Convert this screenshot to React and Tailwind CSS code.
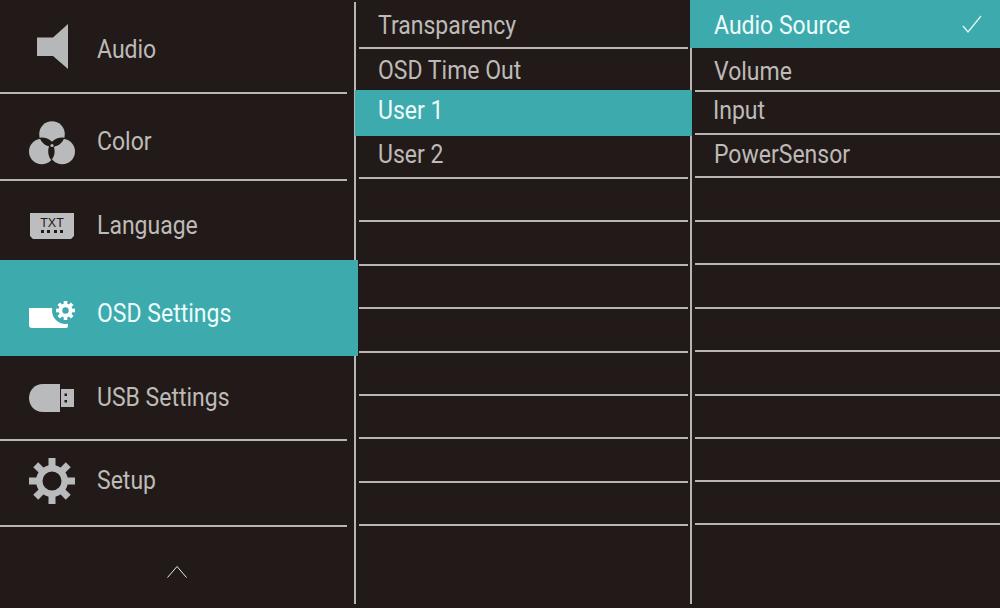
const line = 'bg-[#b9b5b2]'

const Speaker = () => (
    <svg width="46" height="46" viewBox="0 0 46 46" className="block">
        <path d="M8 14.5 L24 14.5 L39 1 L39 46 L24 33 L8 33 Z" fill="#b6b7b9" />
    </svg>
)

const ColorIcon = () => (
    <svg width="46" height="44" viewBox="0 0 46 44" className="block">
        <defs>
            <clipPath id="ct"><circle cx="23" cy="13" r="12.8" /></clipPath>
            <clipPath id="cl"><circle cx="12.8" cy="30.5" r="12.8" /></clipPath>
        </defs>
        <circle cx="23" cy="13" r="12.8" fill="#b9babc" />
        <circle cx="12.8" cy="30.5" r="12.8" fill="#b9babc" />
        <circle cx="33.2" cy="30.5" r="12.8" fill="#b9babc" />
        <g clipPath="url(#ct)"><circle cx="12.8" cy="30.5" r="14" fill="#221a18" /><circle cx="33.2" cy="30.5" r="14" fill="#221a18" /></g>
        <g clipPath="url(#cl)"><circle cx="33.2" cy="30.5" r="14" fill="#221a18" /></g>
        <circle cx="23" cy="24.5" r="1.6" fill="#b9babc" />
    </svg>
)

const TxtIcon = () => (
    <svg width="46" height="28" viewBox="0 0 46 28" className="block">
        <path d="M1 1 H45 V24 L42 27 H4 L1 24 Z" fill="#bcbdbf" />
        <text x="23" y="14.5" textAnchor="middle" fontSize="12.5" fill="#221a18" style={{ fontFamily: '"Liberation Sans", sans-serif' }}>TXT</text>
        <g fill="#221a18">
            <rect x="12" y="18" width="3" height="3" />
            <rect x="18" y="18" width="3" height="3" />
            <rect x="25" y="18" width="3" height="3" />
            <rect x="31" y="18" width="3" height="3" />
        </g>
    </svg>
)

const gearTeeth = [0, 45, 90, 135, 180, 225, 270, 315]

const Gear = ({ cx, cy, r, hole, tooth, len, fill }) => (
    <g>
        {gearTeeth.map((a) => (
            <rect key={a} x={cx - tooth / 2} y={cy - r} width={tooth} height={len} fill={fill} transform={`rotate(${a} ${cx} ${cy})`} />
        ))}
        <circle cx={cx} cy={cy} r={(r - len + 1 + hole) / 2} fill="none" stroke={fill} strokeWidth={r - len + 1 - hole} />
    </g>
)

const OsdIcon = () => (
    <svg width="46" height="30" viewBox="0 0 46 30" className="block">
        <path d="M0 8 H39 V26 Q39 28 37 28 H3 Q0 28 0 25 Z" fill="#fff" />
        <circle cx="36.5" cy="10.5" r="13.5" fill="#3daaad" />
        <Gear cx={36.5} cy={10.5} r={9.5} hole={3.2} tooth={3.6} len={3.5} fill="#fff" />
    </svg>
)

const UsbIcon = () => (
    <svg width="46" height="28" viewBox="0 0 46 28" className="block">
        <path d="M31 0 V28 H14 C5 28 0 21 0 14 C0 7 5 0 14 0 Z" fill="#b9babc" />
        <rect x="32" y="5" width="13" height="18" fill="#b9babc" />
        <rect x="35.5" y="9.5" width="2.5" height="2.5" fill="#221a18" />
        <rect x="35.5" y="16" width="2.5" height="2.5" fill="#221a18" />
    </svg>
)

const SetupIcon = () => (
    <svg width="46" height="46" viewBox="0 0 46 46" className="block">
        <Gear cx={23} cy={23} r={23} hole={9.5} tooth={7} len={8} fill="#b9babc" />
    </svg>
)

const menu = [
    { label: 'Audio', Icon: Speaker, h: 'h-[94px]', pad: 'pt-[6px]', iconGap: 'mb-[6px]', border: true },
    { label: 'Color', Icon: ColorIcon, h: 'h-[87px]', pad: 'pt-[10px]', iconGap: 'mt-[3px]', border: true },
    { label: 'Language', Icon: TxtIcon, h: 'h-[79px]', pad: 'pt-[10px]' },
    { label: 'OSD Settings', Icon: OsdIcon, h: 'h-[96px]', pad: 'pt-[10px]', iconGap: 'mt-[4px]', active: true },
    { label: 'USB Settings', Icon: UsbIcon, h: 'h-[85px]', border: true },
    { label: 'Setup', Icon: SetupIcon, h: 'h-[86px]', pad: 'pb-[4px]', textGap: 'mb-[2px]', border: true },
]

const middle = [
    { label: 'Transparency', h: 'h-[49px]', border: true, pad: 'pt-[6px]' },
    { label: 'OSD Time Out', h: 'h-[41px]', pad: 'pt-[4px]' },
    { label: 'User 1', h: 'h-[46px]', pad: 'pb-[2px]', active: true },
    { label: 'User 2', h: 'h-[43px]', pad: 'pb-[2px]', border: true },
    ...[43, 44, 43, 44, 43, 43, 44, 43].map((n) => ({ label: '', n, border: true })),
]
const rowHeights = { 43: 'h-[43px]', 44: 'h-[44px]' }

const right = [
    { label: 'Audio Source', h: 'h-[48px]', pad: 'pt-[6px]', active: true, check: true },
    { label: 'Volume', h: 'h-[44px]', pad: 'pt-[7px]', border: true },
    { label: 'Input', h: 'h-[43px]', pad: 'pb-[2px]', border: true, shift: '-ml-[1px]' },
    { label: 'PowerSensor', h: 'h-[43px]', border: true },
    ...[44, 43, 44, 43, 44, 43, 43, 43].map((n) => ({ label: '', n, border: true })),
]

const Label = ({ children, active }) => (
    <span className={`inline-block origin-left scale-x-[0.92] whitespace-nowrap text-[25px] leading-none ${active ? 'text-[#eefcfc]' : 'text-[#bdbab7]'}`}>
        {children}
    </span>
)

const MenuRow = ({ item }) => {
    const { Icon } = item
    return (
        <div className={`${item.h} relative flex flex-col ${item.active ? 'z-10 w-[358px] bg-[#3daaad]' : ''}`}>
            <div className={`flex min-h-0 flex-1 items-center ${item.pad || ''}`}>
                <div className={`ml-[29px] w-[68px] shrink-0 ${item.iconGap || ''}`}><Icon /></div>
                <div className={`flex ${item.textGap || ''}`}><Label active={item.active}>{item.label}</Label></div>
            </div>
            {item.border && <div className={`h-[2px] w-[347px] ${line}`} />}
        </div>
    )
}

const ListRow = ({ item, activeMargin, lineMargin, textPad }) => (
    <div className={`${item.h || rowHeights[item.n]} relative flex flex-col ${item.active ? `z-10 bg-[#3daaad] ${activeMargin}` : ''}`}>
        <div className={`flex min-h-0 flex-1 items-center justify-between ${textPad} ${item.pad || ''}`}>
            {item.label && <span className={item.shift}><Label active={item.active}>{item.label}</Label></span>}
            {item.check && (
                <svg width="20" height="18" viewBox="0 0 20 18" className="mr-[18px] mb-[6px]">
                    <path d="M1 11 L6 17 L19 1" fill="none" stroke="#e8fafa" strokeWidth="1.2" />
                </svg>
            )}
        </div>
        {item.border && <div className={`h-[2px] ${lineMargin} ${line}`} />}
    </div>
)

const Divider = () => <div className={`mt-[2px] h-[602px] w-[2px] shrink-0 ${line}`} />

export default function App() {
    return (
        <div className="flex h-[608px] w-[1000px] overflow-hidden bg-[#221a18]" style={{ fontFamily: 'Roboto, "Liberation Sans", sans-serif' }}>
            <div className="flex w-[354px] shrink-0 flex-col">
                {menu.map((item) => <MenuRow key={item.label} item={item} />)}
                <div className="flex flex-1 justify-center pt-[38px]">
                    <svg width="20" height="13" viewBox="0 0 20 13" className="block">
                        <path d="M0.5 12.5 L10 1.5 L19.5 12.5" fill="none" stroke="#e8e8e8" strokeWidth="1" />
                    </svg>
                </div>
            </div>
            <Divider />
            <div className="flex w-[334px] shrink-0 flex-col">
                {middle.map((item, i) => (
                    <ListRow key={i} item={item} activeMargin="-ml-[1px] -mr-[2px]" lineMargin="ml-[3px] mr-[2px]" textPad={item.active ? 'pl-[23px]' : 'pl-[22px]'} />
                ))}
            </div>
            <Divider />
            <div className="flex w-[308px] shrink-0 flex-col">
                {right.map((item, i) => (
                    <ListRow key={i} item={item} activeMargin="-ml-[2px]" lineMargin="ml-[3px]" textPad={item.active ? 'pl-[24px]' : 'pl-[22px]'} />
                ))}
            </div>
        </div>
    )
}
